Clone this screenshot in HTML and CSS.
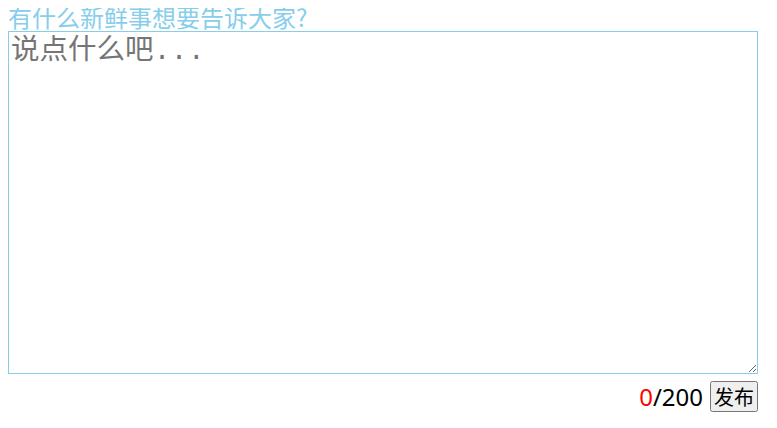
FILE: index.html
```html
<!DOCTYPE html>
<html>
<head>
<meta charset="utf-8">
<link rel="stylesheet" href="styles.css">
</head>
<body>
<div class="box">
  <div class="title">有什么新鲜事想要告诉大家?</div>
  <textarea class="input" placeholder="说点什么吧..."></textarea>
  <div class="footer">
    <span class="count"><span class="used">0</span>/200</span>
    <button class="send">发布</button>
  </div>
</div>
</body>
</html>
```

FILE: styles.css
```css
body {
  margin: 8px;
  font-family: "Noto Sans CJK SC", "Noto Sans", sans-serif;
}
.box {
  width: 750px;
}
.title {
  color: #87ceeb;
  font-family: "Noto Sans CJK SC", sans-serif;
  font-size: 24px;
  line-height: 18px;
  height: 23px;
  white-space: nowrap;
}
.input {
  display: block;
  box-sizing: border-box;
  width: 750px;
  height: 343px;
  margin: 0;
  border: 1px solid #87ceeb;
  padding: 2px;
  font-family: "Liberation Mono", "Noto Sans CJK SC", monospace;
  font-size: 28.5px;
  line-height: 36px;
  outline: none;
  resize: both;
}
.input::placeholder {
  color: #757575;
}
.footer {
  display: flex;
  justify-content: flex-end;
  align-items: center;
  gap: 7px;
  margin-top: 7px;
}
.count {
  font-family: "Noto Sans", sans-serif;
  font-size: 24px;
  line-height: 31px;
  color: #000;
}
.used {
  color: red;
}
.send {
  font-family: "Noto Sans CJK SC", sans-serif;
  font-size: 20px;
  height: 31px;
  padding: 0 2px;
  line-height: 1;
}
```
